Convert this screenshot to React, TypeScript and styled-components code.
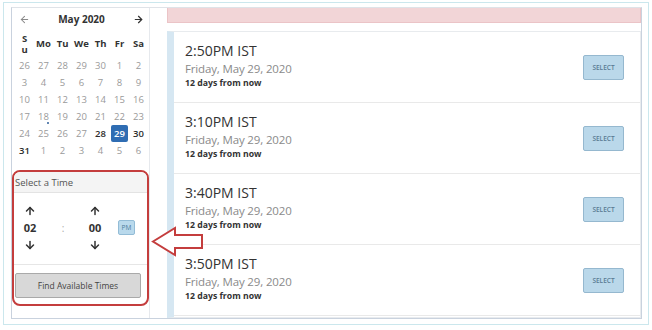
import styled, { createGlobalStyle } from "styled-components";
import { ArrowLeft, ArrowRight, ArrowUp, ArrowDown } from "lucide-react";

const GlobalStyle = createGlobalStyle`
  html, body {
    margin: 0;
    padding: 0;
    background: #ffffff;
    font-family: "Open Sans", "Noto Sans", sans-serif;
  }
`;

const Frame = styled.div`
  width: 644px;
  height: 321px;
  margin: 2px 0 0 3px;
  border: 1px solid #cbe7ed;
  display: flex;
`;

const Panel = styled.div`
  position: relative;
  flex: 1;
  margin: 4px 6px 5px 7px;
  border: 1px solid #c9d2de;
  border-top-color: #dfe3e8;
  display: grid;
  grid-template-columns: 138px 1fr;
  overflow: hidden;
`;

const Sidebar = styled.div`
  border-right: 1px solid #e6e9ed;
  display: flex;
  flex-direction: column;
`;

const Calendar = styled.div`
  display: grid;
  grid-template-columns: repeat(7, 19px);
  grid-template-rows: 22px 27px repeat(6, 17px);
  padding-left: 3px;
`;

const CalHeader = styled.div`
  grid-column: 1 / -1;
  display: flex;
  align-items: center;
  justify-content: space-between;
  padding: 0 4px 0 4px;
  font-size: 10px;
  font-weight: 700;
  color: #333;
`;

const WeekDay = styled.div<{ $narrow?: boolean }>`
  display: flex;
  align-items: center;
  justify-content: center;
  font-size: 9.5px;
  font-weight: 700;
  color: #333;
  line-height: 11px;
  span {
    width: ${(p) => (p.$narrow ? "7px" : "auto")};
    word-break: break-all;
    text-align: center;
  }
`;

const Day = styled.div<{ $kind: string }>`
  position: relative;
  display: flex;
  align-items: center;
  justify-content: center;
  font-size: 9.5px;
  font-weight: ${(p) => (p.$kind === "muted" ? 400 : 600)};
  color: ${(p) =>
    p.$kind === "muted" ? "#9a9a9a" : p.$kind === "selected" ? "#fff" : "#2c2c2c"};
  background: ${(p) => (p.$kind === "selected" ? "#2f6db3" : "transparent")};
  border-radius: 2px;
  margin: 0 1px;
`;

const Dot = styled.span`
  position: absolute;
  right: 3px;
  bottom: 1px;
  width: 2px;
  height: 2px;
  background: #2f5f9a;
  border-radius: 1px;
`;

const TimeBox = styled.div`
  margin-top: 11px;
  border: 2px solid #c43d3d;
  border-radius: 8px;
  height: 132px;
  display: flex;
  flex-direction: column;
  overflow: hidden;
`;

const TimeHeader = styled.div`
  height: 20px;
  background: #f4f4f4;
  border-bottom: 1px solid #e3e3e3;
  display: flex;
  align-items: center;
  font-size: 9.5px;
  color: #555;
  padding-left: 1px;
`;

const Picker = styled.div`
  display: flex;
  align-items: center;
  padding: 9px 0 11px 2px;
  border-bottom: 1px solid #e6e6e6;
`;

const Spinner = styled.div<{ $w: number }>`
  width: ${(p) => p.$w}px;
  display: grid;
  grid-auto-rows: 17px;
  justify-items: center;
  align-items: center;
  font-size: 11px;
  font-weight: 700;
  color: #333;
`;

const Colon = styled.div`
  width: 38px;
  text-align: center;
  font-size: 10px;
  color: #aaa;
`;

const PmButton = styled.div`
  margin-left: 10px;
  width: 15px;
  height: 13px;
  background: #b9d9ec;
  border: 1px solid #93bcd6;
  border-radius: 2px;
  font-size: 6.5px;
  color: #4d7c9c;
  display: flex;
  align-items: center;
  justify-content: center;
`;

const FindButton = styled.div`
  margin: 8px 6px 0 1px;
  height: 23px;
  background: #d8d8d8;
  border: 1px solid #a9a9a9;
  border-radius: 2px;
  font-size: 8.5px;
  color: #444;
  display: flex;
  align-items: center;
  justify-content: center;
`;

const Content = styled.div`
  padding-left: 17px;
  display: flex;
  flex-direction: column;
`;

const Alert = styled.div`
  height: 14px;
  background: #f2d5d7;
  border: 1px solid #ebc4c7;
  border-top: none;
`;

const List = styled.div`
  margin-top: 8px;
  border: 1px solid #e8ebee;
  border-left: 7px solid #d6e7f2;
  flex: 1;
`;

const Row = styled.div`
  height: 70px;
  border-bottom: 1px solid #e9e9e9;
  display: flex;
  align-items: center;
  justify-content: space-between;
  padding: 0 16px 0 11px;
`;

const Info = styled.div`
  display: flex;
  flex-direction: column;
  padding-bottom: 3px;
`;

const Title = styled.div`
  font-size: 14px;
  line-height: 18px;
  color: #333;
`;

const DateText = styled.div`
  font-size: 11.5px;
  letter-spacing: -0.15px;
  line-height: 17px;
  color: #8a8a8a;
`;

const Sub = styled.div`
  font-size: 8.7px;
  line-height: 12px;
  font-weight: 700;
  color: #333;
`;

const SelectButton = styled.div`
  width: 39px;
  height: 23px;
  background: #bad8ea;
  border: 1px solid #95b8cf;
  border-radius: 2px;
  font-size: 6.5px;
  font-weight: 600;
  color: #587a92;
  display: flex;
  align-items: center;
  justify-content: center;
`;

const Pointer = styled.svg`
  position: absolute;
  left: 139px;
  top: 218px;
`;

type DayItem = { d: number; kind: "muted" | "avail" | "selected"; dot?: boolean };

const m = (d: number): DayItem => ({ d, kind: "muted" });

const weeks: DayItem[][] = [
  [26, 27, 28, 29, 30, 1, 2].map(m),
  [3, 4, 5, 6, 7, 8, 9].map(m),
  [10, 11, 12, 13, 14, 15, 16].map(m),
  [m(17), { d: 18, kind: "muted", dot: true }, m(19), m(20), m(21), m(22), m(23)],
  [m(24), m(25), m(26), m(27), { d: 28, kind: "avail" }, { d: 29, kind: "selected" }, { d: 30, kind: "avail" }],
  [{ d: 31, kind: "avail" }, m(1), m(2), m(3), m(4), m(5), m(6)],
];

const weekDays = ["Su", "Mo", "Tu", "We", "Th", "Fr", "Sa"];

const slots = ["2:50PM IST", "3:10PM IST", "3:40PM IST", "3:50PM IST"];

export default function App() {
  return (
    <>
      <GlobalStyle />
      <Frame>
        <Panel>
          <Sidebar>
            <Calendar>
              <CalHeader>
                <ArrowLeft size={11} color="#8a8a8a" strokeWidth={2.2} />
                <span>May 2020</span>
                <ArrowRight size={11} color="#333" strokeWidth={2.6} />
              </CalHeader>
              {weekDays.map((w, i) => (
                <WeekDay key={w} $narrow={i === 0}>
                  <span>{w}</span>
                </WeekDay>
              ))}
              {weeks.flat().map((day, i) => (
                <Day key={i} $kind={day.kind}>
                  {day.d}
                  {day.dot && <Dot />}
                </Day>
              ))}
            </Calendar>
            <TimeBox>
              <TimeHeader>Select a Time</TimeHeader>
              <Picker>
                <Spinner $w={28}>
                  <ArrowUp size={12} strokeWidth={3} />
                  <span>02</span>
                  <ArrowDown size={12} strokeWidth={3} />
                </Spinner>
                <Colon>:</Colon>
                <Spinner $w={26}>
                  <ArrowUp size={12} strokeWidth={3} />
                  <span>00</span>
                  <ArrowDown size={12} strokeWidth={3} />
                </Spinner>
                <PmButton>PM</PmButton>
              </Picker>
              <FindButton>Find Available Times</FindButton>
            </TimeBox>
          </Sidebar>
          <Content>
            <Alert />
            <List>
              {slots.map((s) => (
                <Row key={s}>
                  <Info>
                    <Title>{s}</Title>
                    <DateText>Friday, May 29, 2020</DateText>
                    <Sub>12 days from now</Sub>
                  </Info>
                  <SelectButton>SELECT</SelectButton>
                </Row>
              ))}
            </List>
          </Content>
          <Pointer width="54" height="34" viewBox="0 0 54 34">
            <polygon
              points="2,15.5 24,2 24,9 51,9 51,22 24,22 24,29"
              fill="#ffffff"
              stroke="#c43d3d"
              strokeWidth="2"
              strokeLinejoin="miter"
            />
          </Pointer>
        </Panel>
      </Frame>
    </>
  );
}
